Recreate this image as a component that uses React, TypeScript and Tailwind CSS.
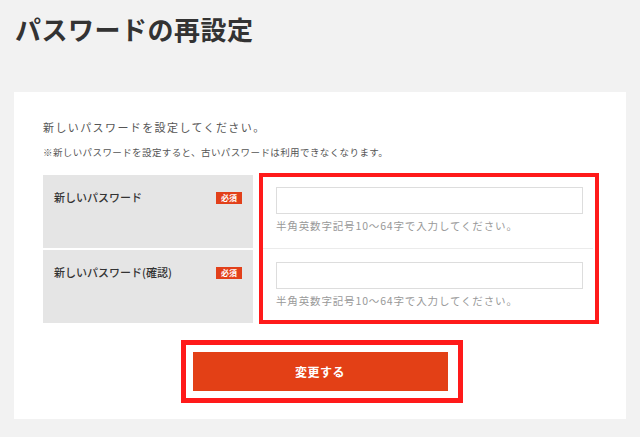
const jp = "font-['Noto_Sans_CJK_JP',sans-serif]";

const rows = [
  { label: "新しいパスワード" },
  { label: "新しいパスワード(確認)" },
];

export default function App() {
  return (
    <div className={`${jp} min-h-screen w-full bg-[#f2f2f2] pt-[13px]`}>
      <h1 className="pl-[15px] text-[26px] leading-[32px] font-bold tracking-[0.5px] text-[#333]">
        パスワードの再設定
      </h1>

      <div className="mx-[14px] mt-[47px] h-[327px] bg-white px-[29px] pt-[29px]">
        <p className="text-[11px] leading-[12px] tracking-[1.4px] text-[#555]">
          新しいパスワードを設定してください。
        </p>
        <p className="mt-[13px] text-[9.5px] leading-[12px] tracking-[0.4px] text-[#555]">
          ※新しいパスワードを設定すると、古いパスワードは利用できなくなります。
        </p>

        <div className="relative mt-[17px] flex flex-col gap-[2px]">
          {rows.map((row) => (
            <div key={row.label} className="flex h-[73px]">
              <div className="flex w-[210px] shrink-0 items-start justify-between bg-[#e5e5e5] px-[11px] pt-[15px]">
                <span className="text-[11px] leading-[14px] font-medium text-[#333]">
                  {row.label}
                </span>
                <span className="mt-[2px] flex h-[12px] w-[26px] items-center justify-center bg-[#e2401a] text-[8px] leading-none font-bold text-white">
                  必須
                </span>
              </div>
              <div className="ml-[8px] flex-1 pl-[15px] pt-[12px]">
                <input
                  type="password"
                  className="block h-[27px] w-[307px] border border-[#dddddd] bg-white outline-none"
                />
                <p className="mt-[6px] text-[10.5px] leading-[12px] tracking-[0.85px] text-[#999]">
                  半角英数字記号10〜64字で入力してください。
                </p>
              </div>
            </div>
          ))}
          <div className="pointer-events-none absolute top-[73px] right-[4px] left-[220px] h-px bg-[#ebebeb]" />
          <div className="pointer-events-none absolute top-[-2px] left-[216px] h-[151px] w-[340px] border-[4px] border-[#ff1a1a]" />
        </div>

        <div className="mt-[17px] flex justify-center">
          <div className="ml-[3px] border-[5px] border-[#ff1a1a] py-[7px] pr-[10px] pl-[7px]">
            <button
              type="button"
              className="flex h-[39px] w-[255px] items-center justify-center bg-[#e34016] text-[12px] font-bold tracking-[0.5px] text-white"
            >
              変更する
            </button>
          </div>
        </div>
      </div>
    </div>
  );
}
